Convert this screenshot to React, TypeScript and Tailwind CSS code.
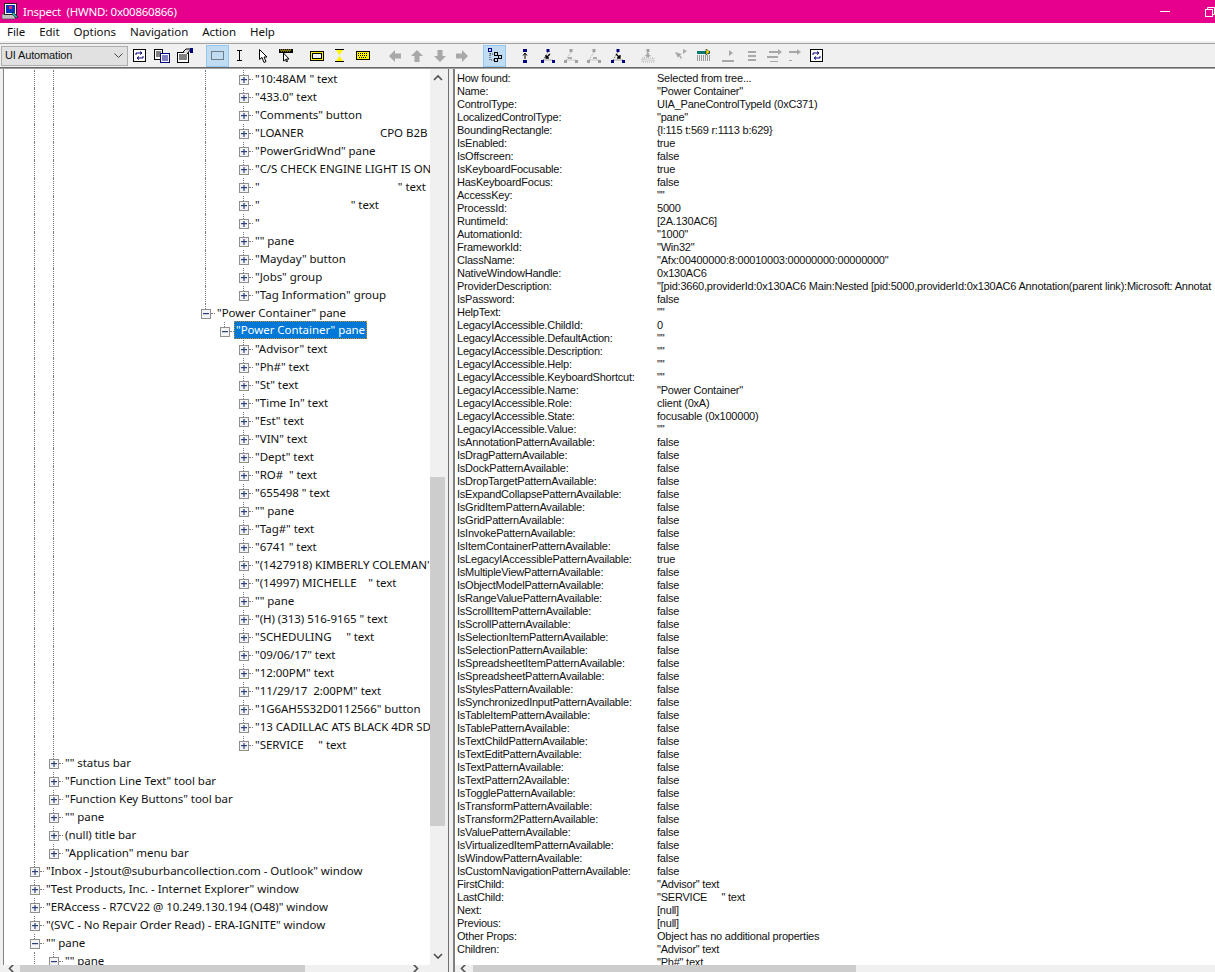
import React from "react";

const segoe = "font-['Noto_Sans','Open_Sans',sans-serif]";

type Row = { t: string; box?: "+" | "-"; lvl: number; guides: number[]; half?: boolean; sel?: boolean };

const sp = (n: number) => " ".repeat(n);
const G0 = [0, 1, 9];
const leaf = (t: string, guides = G0): Row => ({ t, box: "+", lvl: 11, guides });
const rows: Row[] = [
  ...[
    '"10:48AM " text', '"433.0" text', '"Comments" button', '"LOANER' + sp(26) + "CPO B2B",
    '"PowerGridWnd" pane', '"C/S CHECK ENGINE LIGHT IS ON', '"' + sp(47) + '" text',
    '"' + sp(31) + '" text', '"', '"" pane', '"Mayday" button', '"Jobs" group', '"Tag Information" group',
  ].map((t) => leaf(t)),
  { t: '"Power Container" pane', box: "-", lvl: 9, guides: [0, 1] },
  { t: '"Power Container" pane', box: "-", lvl: 10, guides: [0, 1], sel: true },
  ...[
    '"Advisor" text', '"Ph#" text', '"St" text', '"Time In" text', '"Est" text', '"VIN" text', '"Dept" text', '"RO#  " text',
    '"655498 " text', '"" pane', '"Tag#" text', '"6741 " text', "\"(1427918) KIMBERLY COLEMAN'", '"(14997) MICHELLE    " text',
    '"" pane', '"(H) (313) 516-9165 " text', '"SCHEDULING     " text', '"09/06/17" text', '"12:00PM" text',
    '"11/29/17  2:00PM" text', '"1G6AH5S32D0112566" button', '"13 CADILLAC ATS BLACK 4DR SD', '"SERVICE     " text',
  ].map((t) => leaf(t, [0, 1])),
  ...['"" status bar', '"Function Line Text" tool bar', '"Function Key Buttons" tool bar', '"" pane', '(null) title bar', '"Application" menu bar'].map(
    (t): Row => ({ t, box: "+", lvl: 1, guides: [0] })
  ),
  ...[
    '"Inbox - Jstout@suburbancollection.com - Outlook" window', '"Test Products, Inc. - Internet Explorer" window',
    '"ERAccess - R7CV22 @ 10.249.130.194 (O48)" window', '"(SVC - No Repair Order Read) - ERA-IGNITE" window',
  ].map((t): Row => ({ t, box: "+", lvl: 0, guides: [] })),
  { t: '"" pane', box: "-", lvl: 0, guides: [] },
  { t: '"" pane', box: "-", lvl: 1, guides: [0] },
];

const props: [string, string][] = [
  ["How found:", "Selected from tree..."],
  ["Name:", '"Power Container"'],
  ["ControlType:", "UIA_PaneControlTypeId (0xC371)"],
  ["LocalizedControlType:", '"pane"'],
  ["BoundingRectangle:", "{l:115 t:569 r:1113 b:629}"],
  ["IsEnabled:", "true"],
  ["IsOffscreen:", "false"],
  ["IsKeyboardFocusable:", "true"],
  ["HasKeyboardFocus:", "false"],
  ["AccessKey:", '""'],
  ["ProcessId:", "5000"],
  ["RuntimeId:", "[2A.130AC6]"],
  ["AutomationId:", '"1000"'],
  ["FrameworkId:", '"Win32"'],
  ["ClassName:", '"Afx:00400000:8:00010003:00000000:00000000"'],
  ["NativeWindowHandle:", "0x130AC6"],
  ["ProviderDescription:", '"[pid:3660,providerId:0x130AC6 Main:Nested [pid:5000,providerId:0x130AC6 Annotation(parent link):Microsoft: Annotat'],
  ["IsPassword:", "false"],
  ["HelpText:", '""'],
  ["LegacyIAccessible.ChildId:", "0"],
  ["LegacyIAccessible.DefaultAction:", '""'],
  ["LegacyIAccessible.Description:", '""'],
  ["LegacyIAccessible.Help:", '""'],
  ["LegacyIAccessible.KeyboardShortcut:", '""'],
  ["LegacyIAccessible.Name:", '"Power Container"'],
  ["LegacyIAccessible.Role:", "client (0xA)"],
  ["LegacyIAccessible.State:", "focusable (0x100000)"],
  ["LegacyIAccessible.Value:", '""'],
  ...[
    "IsAnnotationPatternAvailable", "IsDragPatternAvailable", "IsDockPatternAvailable", "IsDropTargetPatternAvailable",
    "IsExpandCollapsePatternAvailable", "IsGridItemPatternAvailable", "IsGridPatternAvailable", "IsInvokePatternAvailable",
    "IsItemContainerPatternAvailable",
  ].map((k): [string, string] => [k + ":", "false"]),
  ["IsLegacyIAccessiblePatternAvailable:", "true"],
  ...[
    "IsMultipleViewPatternAvailable", "IsObjectModelPatternAvailable", "IsRangeValuePatternAvailable", "IsScrollItemPatternAvailable",
    "IsScrollPatternAvailable", "IsSelectionItemPatternAvailable", "IsSelectionPatternAvailable", "IsSpreadsheetItemPatternAvailable",
    "IsSpreadsheetPatternAvailable", "IsStylesPatternAvailable", "IsSynchronizedInputPatternAvailable", "IsTableItemPatternAvailable",
    "IsTablePatternAvailable", "IsTextChildPatternAvailable", "IsTextEditPatternAvailable", "IsTextPatternAvailable",
    "IsTextPattern2Available", "IsTogglePatternAvailable", "IsTransformPatternAvailable", "IsTransform2PatternAvailable",
    "IsValuePatternAvailable", "IsVirtualizedItemPatternAvailable", "IsWindowPatternAvailable", "IsCustomNavigationPatternAvailable",
  ].map((k): [string, string] => [k + ":", "false"]),
  ["FirstChild:", '"Advisor" text'],
  ["LastChild:", '"SERVICE     " text'],
  ["Next:", "[null]"],
  ["Previous:", "[null]"],
  ["Other Props:", "Object has no additional properties"],
  ["Children:", '"Advisor" text'],
  ["", '"Ph#" text'],
];

function Box({ open }: { open: boolean }) {
  return (
    <svg width="10" height="10" viewBox="0 0 10 10" className="absolute left-[5px] top-[5px] z-10">
      <rect x="0.5" y="0.5" width="9" height="9" fill="#f4f4f4" stroke="#8e8f8f" />
      <rect x="2" y="4" width="6" height="1.2" fill="#2a3f7a" />
      {!open && <rect x="4.4" y="2" width="1.2" height="6" fill="#2a3f7a" />}
    </svg>
  );
}

function TreeRow({ r }: { r: Row }) {
  const cells = [];
  for (let i = 0; i <= r.lvl; i++) {
    const here = i === r.lvl;
    const line = r.guides.includes(i);
    cells.push(
      <div key={i} className="relative flex h-[18px] w-[19px] shrink-0 justify-center">
        {(line || here) && (
          <div className={`w-0 border-l border-dotted border-[#7a7a7a] ${line ? "h-full" : "h-[9px]"}`} />
        )}
        {here && r.box && <Box open={r.box === "-"} />}
        {here && <div className="absolute left-[15px] top-[9px] w-[4px] border-t border-dotted border-[#7a7a7a]" />}
      </div>
    );
  }
  return (
    <div className="flex h-[18px] shrink-0 items-center whitespace-pre pl-[21px] text-[11.5px] tracking-[-0.05px]">
      {cells}
      <span
        className={
          r.sel
            ? "-mt-px flex h-[18px] items-center self-start border border-dotted border-[#c08a30] bg-[#0078d7] px-[1px] text-white"
            : "ml-[2px] text-[#111]"
        }
      >
        {r.t}
      </span>
    </div>
  );
}

function Chevron({ dir }: { dir: "up" | "down" | "left" | "right" }) {
  const rot = { up: "", down: "rotate-180", left: "-rotate-90", right: "rotate-90" }[dir];
  return (
    <svg width="10" height="7" viewBox="0 0 10 7" className={rot}>
      <path d="M1 6 L5 2 L9 6" fill="none" stroke="#505050" strokeWidth="1.6" />
    </svg>
  );
}

const Btn = ({ children, active, ml }: { children: React.ReactNode; active?: boolean; ml?: string }) => (
  <div
    className={`flex h-[22px] w-[23px] shrink-0 items-center justify-center ${ml ?? ""} ${
      active ? "border border-[#90c8f0] bg-[#c0dcf3]" : ""
    }`}
  >
    {children}
  </div>
);

const N = "#000080";
const D = "#a0a0a0";

const Refresh = () => (
  <svg width="13" height="13" viewBox="0 0 13 13">
    <rect x="0.5" y="0.5" width="12" height="12" fill="#fff" stroke="#000" />
    <path d="M3 6V4h5M7 2.5l2 1.5-2 1.5M10 7v2H5M6 7.5L4 9l2 1.5" fill="none" stroke={N} />
  </svg>
);
const Copy = () => (
  <svg width="16" height="14" viewBox="0 0 16 14">
    <rect x="0.5" y="0.5" width="8" height="10" fill="#fff" stroke="#000" />
    <path d="M2 3h5M2 5h5M2 7h5" stroke="#000" />
    <rect x="6.5" y="4.5" width="9" height="9" fill="#fff" stroke={N} />
    <path d="M8 7h6M8 9h6M8 11h6" stroke={N} />
  </svg>
);
const PropsIcon = () => (
  <svg width="17" height="15" viewBox="0 0 17 15">
    <rect x="0.5" y="4.5" width="11" height="10" fill="#fff" stroke="#000" />
    <path d="M2 7h8M2 9h8M2 11h8" stroke="#000" />
    <path d="M6 4L9 1h5l-4 5" fill="#ddd" stroke="#000" />
    <rect x="13" y="0" width="3" height="5" fill={N} />
  </svg>
);
const Marquee = () => (
  <svg width="13" height="9" viewBox="0 0 13 9">
    <rect x="0.5" y="0.5" width="12" height="8" fill="none" stroke="#222" strokeDasharray="1 1" />
  </svg>
);
const IBeam = () => (
  <svg width="7" height="11" viewBox="0 0 7 11">
    <path d="M1 .5h5M1 10.5h5M3.5 0v11" stroke="#000" fill="none" />
  </svg>
);
const Cursor = () => (
  <svg width="9" height="14" viewBox="0 0 9 14">
    <path d="M.5.5v10l2.5-2 2 5 2-1-2-4.500h3z" fill="#fff" stroke="#000" />
  </svg>
);
const TipCursor = () => (
  <svg width="14" height="13" viewBox="0 0 14 13">
    <rect x="0" y="0" width="14" height="4" fill="#000" />
    <path d="M1 1h1M3 1h1M5 1h1M7 1h1M9 1h1M11 1h1M2 2h1M4 2h1M6 2h1M8 2h1M10 2h1" stroke="#ffe200" />
    <path d="M4.500 4v8l2-1.500 1 2.500 1-.5-1-2.500h2.500z" fill="#fff" stroke="#000" />
  </svg>
);
const YRect = () => (
  <svg width="14" height="10" viewBox="0 0 14 10">
    <rect x="0.5" y="0.5" width="13" height="9" fill="#fff200" stroke="#000" />
    <rect x="2.5" y="2.5" width="9" height="5" fill="#f0f0f0" stroke="#000" />
  </svg>
);
const Hour = () => (
  <svg width="9" height="13" viewBox="0 0 9 13">
    <path d="M0 .5h9M0 12.500h9" stroke="#000" />
    <path d="M1 1h7L4.500 6zM1 12l3.500-5 3.500 5z" fill="#fff200" />
  </svg>
);
const Keyb = () => (
  <svg width="14" height="9" viewBox="0 0 14 9">
    <rect x="0.5" y="0.5" width="13" height="8" fill="#fff200" stroke="#000" />
    <path d="M2 2.500h10M2 4.500h10M3 6.500h8" stroke="#000" strokeDasharray="1 1" />
  </svg>
);
const Arrow = ({ rot }: { rot: string }) => (
  <svg width="12" height="12" viewBox="0 0 12 12" className={rot}>
    <path d="M0 6L6 0v3.500h6v5H6V12z" fill="#a8a8a8" />
  </svg>
);
const TreeIcon = () => (
  <svg width="14" height="15" viewBox="0 0 14 15">
    <path d="M2 3v9h5M2 6h5" stroke="#333" strokeDasharray="1 1" fill="none" />
    <rect x="0.5" y="0.5" width="3" height="3" fill="none" stroke={N} />
    <rect x="6.5" y="4.5" width="3" height="3" fill="none" stroke="#000" />
    <rect x="10.5" y="7.5" width="3" height="3" fill="none" stroke="#000" />
    <rect x="6.5" y="10.5" width="3" height="3" fill="none" stroke="#000" />
  </svg>
);
const Tri = ({ c = N, arrow, dim }: { c?: string; arrow?: string; dim?: boolean }) => (
  <svg width="14" height="14" viewBox="0 0 14 14">
    <path d="M7 3L2 11h10" fill="none" stroke={dim ? D : "#555"} strokeDasharray="1 1" />
    <rect x="5.500" y="0" width="3" height="3" fill={c} />
    <rect x="0" y="11" width="3" height="3" fill={c} />
    <rect x="11" y="11" width="3" height="3" fill={c} />
    {arrow && <path d={arrow} stroke={dim ? "#888" : "#000"} fill="none" strokeWidth="1.300" />}
  </svg>
);
const Up = () => (
  <svg width="6" height="14" viewBox="0 0 6 14">
    <rect x="1" y="0" width="4" height="3" fill={N} />
    <rect x="1" y="11" width="4" height="3" fill={N} />
    <path d="M3 10V5M1 6.500L3 4l2 2.500" stroke="#000" fill="none" />
  </svg>
);
const Dim = ({ path }: { path: string }) => (
  <svg width="16" height="14" viewBox="0 0 16 14">
    <path d={path} fill="#a8a8a8" />
  </svg>
);
const Nav = () => (
  <svg width="14" height="14" viewBox="0 0 14 14">
    <path d="M7 3L2 11h10" fill="none" stroke={D} strokeDasharray="1 1" />
    <rect x="1" y="9" width="12" height="4" fill="none" stroke="#aaa" strokeDasharray="1 1" />
    <rect x="5.500" y="0" width="3" height="3" fill={D} />
    <path d="M6 4h2v2h2l-3 3-3-3h2z" fill="#a8a8a8" />
  </svg>
);
const Pick = () => (
  <svg width="13" height="13" viewBox="0 0 13 13">
    <rect x="0" y="2" width="13" height="3" fill="#0a7a70" />
    <path d="M0 7h13M0 9h13M0 11h13" stroke="#444" strokeDasharray="1 1" />
    <path d="M9 0l4 3-4 3z" fill="#ffe200" stroke="#000" strokeWidth=".5" />
  </svg>
);

function VScroll() {
  return (
    <div className="flex w-[15px] shrink-0 flex-col items-center bg-[#f0f0f0]">
      <div className="flex h-[17px] shrink-0 items-center"><Chevron dir="up" /></div>
      <div className="mt-[391px] h-[349px] w-full shrink-0 bg-[#cdcdcd]" />
      <div className="mt-auto flex h-[17px] shrink-0 items-center"><Chevron dir="down" /></div>
    </div>
  );
}

function HScroll({ lead, thumbW, end }: { lead: string; thumbW: string; end?: boolean }) {
  return (
    <div className="flex h-[7px] shrink-0 items-start overflow-hidden bg-[#f0f0f0]">
      <div className={`${lead} shrink-0 pl-[3px]`}><Chevron dir="left" /></div>
      <div className={`h-[7px] shrink-0 bg-[#cdcdcd] ${thumbW}`} />
      {end && <div className="ml-auto mr-[24px] shrink-0"><Chevron dir="right" /></div>}
    </div>
  );
}

export default function App() {
  return (
    <div className={`flex h-[972px] w-[1215px] flex-col overflow-hidden bg-white ${segoe}`}>
      {/* Title bar */}
      <div className="flex h-[23px] shrink-0 items-center bg-[#e6008c] pl-[2px] text-[11.5px] tracking-[-0.25px] text-white">
        <svg width="17" height="17" viewBox="0 0 17 17" className="mr-[4px] shrink-0">
          <rect x="0" y="11" width="13" height="5" fill="#c0c0c0" stroke="#444" strokeWidth=".6" />
          <rect x="2.500" y="0.500" width="12" height="11" fill="#fff" stroke="#222" />
          <rect x="4" y="2" width="9" height="8" fill="#1030c0" />
          <rect x="7" y="3" width="3" height="3" fill="#e03060" />
          <path d="M11 9l5 5-2 1-4-4z" fill="#20b0b0" stroke="#000" strokeWidth=".5" />
        </svg>
        <span className="whitespace-pre">Inspect  (HWND: 0x00860866)</span>
        <div className="ml-auto flex h-full items-center">
          <div className="mr-[35px] h-px w-[10px] bg-white" />
          <svg width="10" height="10" viewBox="0 0 10 10" className="mr-0">
            <path d="M2.500 2.500V.5h7v7H7.500" fill="none" stroke="#fff" />
            <rect x="0.5" y="2.500" width="7" height="7" fill="none" stroke="#fff" />
          </svg>
        </div>
      </div>
      {/* Menu */}
      <div className="flex h-[18px] shrink-0 items-center text-[11.5px] tracking-[-0.05px] text-[#111]">
        {["File", "Edit", "Options", "Navigation", "Action", "Help"].map((m) => (
          <span key={m} className="px-[7px]">{m}</span>
        ))}
      </div>
      {/* Toolbar */}
      <div className="h-[2px] shrink-0 bg-[#f0f0f0]" />
      <div className="flex h-[24px] shrink-0 items-center border-t border-[#a0a0a0] bg-[#f0f0f0]">
        <div className="ml-px flex h-[20px] w-[127px] shrink-0 items-center justify-between border border-[#adadad] bg-[#e1e1e1] pl-[3px] pr-[4px] font-['Liberation_Sans',Arial,sans-serif] text-[11px] tracking-[-0.15px] text-[#111]">
          <span>UI Automation</span>
          <svg width="9" height="5" viewBox="0 0 9 5"><path d="M.5 .5l4 4 4-4" fill="none" stroke="#444" /></svg>
        </div>
        <Btn><Refresh /></Btn>
        <Btn ml="ml-[-1px]"><Copy /></Btn>
        <Btn ml="ml-[1px]"><PropsIcon /></Btn>
        <Btn active ml="ml-[9px]"><Marquee /></Btn>
        <Btn ml="ml-[-1px]"><IBeam /></Btn>
        <Btn ml="ml-[1px]"><Cursor /></Btn>
        <Btn ml="ml-[-1px]"><TipCursor /></Btn>
        <Btn ml="ml-[8px]"><YRect /></Btn>
        <Btn><Hour /></Btn>
        <Btn><Keyb /></Btn>
        <Btn ml="ml-[9px]"><Arrow rot="" /></Btn>
        <Btn ml="ml-[-1px]"><Arrow rot="rotate-90" /></Btn>
        <Btn><Arrow rot="-rotate-90" /></Btn>
        <Btn ml="ml-[-1px]"><Arrow rot="rotate-180" /></Btn>
        <Btn active ml="ml-[10px]"><TreeIcon /></Btn>
        <Btn ml="ml-[7px]"><Up /></Btn>
        <Btn><Tri arrow="M9 5L5 9M5 6v3h3" /></Btn>
        <Btn><Tri c={D} dim arrow="M4 9h4" /></Btn>
        <Btn><Tri c={D} dim arrow="M6 9h4" /></Btn>
        <Btn ml="ml-[1px]"><Tri arrow="M5 5l4 4M9 6v3H6" /></Btn>
        <Btn ml="ml-[7px]"><Nav /></Btn>
        <Btn ml="ml-[10px]"><Dim path="M2 3l3 6 1-2 2 3 1-1-2-3 2-1zM10 0l4 2-4 3z" /></Btn>
        <Btn><Pick /></Btn>
        <Btn ml="ml-[1px]"><Dim path="M2 11h12v2H2zM9 1l4 3-4 3z" /></Btn>
        <Btn><Dim path="M1 2v10M5 2h8v2H5zM5 6h8v2H5zM5 10h8v2H5z" /></Btn>
        <Btn><Dim path="M3 2h9v2H3zM1 7h11v2H1zM4 12h8v1H4zM12 0l4 3-4 3z" /></Btn>
        <Btn ml="ml-[-3px]"><Dim path="M3 2h8v2H3zM11 0l4 3-4 3zM3 11h3v1H3z" /></Btn>
        <Btn><Refresh /></Btn>
      </div>
      <div className="h-[2px] shrink-0 border-t border-[#696969] bg-[#a0a0a0]" />
      {/* Body */}
      <div className="flex min-h-0 flex-1 bg-[#f0f0f0]">
        {/* Left pane */}
        <div className="flex w-[445px] shrink-0 flex-col border-l-[3px] border-[#f0f0f0]">
          <div className="flex min-h-0 flex-1 border-l border-[#808080]">
            <div className="flex min-w-0 flex-1 flex-col overflow-hidden bg-white pt-px">
              {rows.map((r, i) => <TreeRow key={i} r={r} />)}
            </div>
            <VScroll />
          </div>
          <HScroll lead="w-[17px]" thumbW="w-[285px]" end />
        </div>
        {/* Splitter */}
        <div className="w-[3px] shrink-0 bg-[#f0f0f0]" />
        <div className="w-px shrink-0 bg-[#707070]" />
        <div className="w-[4px] shrink-0 bg-[#f0f0f0]" />
        {/* Right pane */}
        <div className="flex min-w-0 flex-1 flex-col border-l-2 border-[#808080]">
          <div className="flex min-h-0 flex-1 flex-col overflow-hidden bg-white pl-[2px] pt-[3px] font-['Liberation_Sans',Arial,sans-serif] text-[11px] tracking-[-0.22px] text-[#111]">
            {props.map(([k, v], i) => (
              <div key={i} className="flex h-[13px] shrink-0 items-center whitespace-pre">
                <span className="w-[200px] shrink-0">{k}</span>
                <span>{v}</span>
              </div>
            ))}
          </div>
          <HScroll lead="w-[18px]" thumbW="w-[383px]" />
        </div>
      </div>
    </div>
  );
}
